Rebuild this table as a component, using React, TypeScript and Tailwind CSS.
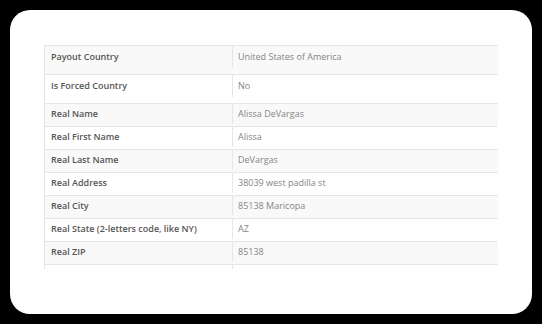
const rows: { label: string; value: string; h: string }[] = [
  { label: 'Payout Country', value: 'United States of America', h: 'h-[28px] pb-[6px]' },
  { label: 'Is Forced Country', value: 'No', h: 'h-[29px] pb-[6px]' },
  { label: 'Real Name', value: 'Alissa DeVargas', h: 'h-[23px] pb-[2px]' },
  { label: 'Real First Name', value: 'Alissa', h: 'h-[23px] pb-[2px]' },
  { label: 'Real Last Name', value: 'DeVargas', h: 'h-[23px] pb-[2px]' },
  { label: 'Real Address', value: '38039 west padilla st', h: 'h-[23px] pb-[2px]' },
  { label: 'Real City', value: '85138 Maricopa', h: 'h-[23px] pb-[2px]' },
  { label: 'Real State (2-letters code, like NY)', value: 'AZ', h: 'h-[23px] pb-[2px]' },
  { label: 'Real ZIP', value: '85138', h: 'h-[23px] pb-[2px]' },
  { label: '', value: '', h: 'h-[23px]' },
];

const App = () => {
  return (
    <div className="w-[542px] h-[324px] bg-black p-[10px]" style={{ fontFamily: '"Open Sans", sans-serif' }}>
      <div className="w-[522px] h-[304px] bg-white rounded-[20px] pt-[35px] px-[34px]">
        <div className="h-[224px] overflow-hidden">
          <div className="w-[455px] border border-[#e6e6e6] shadow-[0_0_2px_rgba(0,0,0,0.08)]">
            {rows.map((r, i) => (
              <div
                key={i}
                className={`flex ${r.h} ${i > 0 ? 'border-t border-[#e6e6e6]' : ''} ${i % 2 == 0 ? 'bg-[#f9f9f9]' : 'bg-white'}`}
              >
                <div className="w-[188px] flex items-center pl-[6px] text-[9px] font-semibold text-[#555] border-r border-[#e6e6e6]">
                  {r.label}
                </div>
                <div className="flex-1 flex items-center pl-[5px] text-[9px] text-[#858585]">{r.value}</div>
              </div>
            ))}
          </div>
        </div>
      </div>
    </div>
  );
};

export default App;
